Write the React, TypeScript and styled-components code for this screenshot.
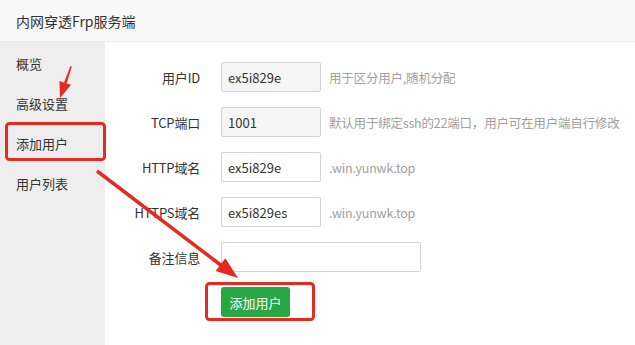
import * as React from "react";
import styled, { createGlobalStyle } from "styled-components";

const fontStack = `"Noto Sans CJK SC", "Noto Sans", sans-serif`;
const red = "#e62a20";

const GlobalStyle = createGlobalStyle`
  html, body {
    margin: 0;
    padding: 0;
    background: #fff;
  }
  body {
    font-family: ${fontStack};
    color: #333;
  }
`;

const Page = styled.div`
  position: relative;
  width: 635px;
  height: 345px;
  overflow: hidden;
  display: flex;
  flex-direction: column;
`;

const Header = styled.div`
  height: 41px;
  flex: none;
  display: flex;
  align-items: center;
  padding-left: 16px;
  background: #f8f8f8;
  border-bottom: 1px solid #ececec;
  font-size: 14px;
  color: #333;
`;

const Body = styled.div`
  flex: 1;
  display: flex;
`;

const Sidebar = styled.div`
  width: 105px;
  flex: none;
  background: #eeeeee;
  padding-top: 1px;
`;

const NavItem = styled.div`
  height: 40px;
  display: flex;
  align-items: center;
  padding-left: 16px;
  font-size: 13px;
  color: #333;
`;

const Main = styled.div`
  flex: 1;
  padding-top: 20px;
`;

const Form = styled.div`
  display: grid;
  grid-template-columns: 95px auto;
  column-gap: 21px;
  row-gap: 15px;
  align-items: center;
  justify-content: start;
`;

const Label = styled.div`
  text-align: right;
  font-size: 13px;
  letter-spacing: -0.2px;
  color: #333;
`;

const Field = styled.div`
  display: flex;
  align-items: center;
`;

const Input = styled.div<{ $readonly?: boolean; $wide?: boolean }>`
  box-sizing: border-box;
  width: ${(p) => (p.$wide ? "200px" : "100px")};
  height: 30px;
  border: 1px solid #d4d4d4;
  border-radius: 2px;
  background: ${(p) => (p.$readonly ? "#f5f5f5" : "#fff")};
  padding-left: 6px;
  display: flex;
  align-items: center;
  font-size: 13px;
  color: #333;
`;

const Hint = styled.span`
  margin-left: 8px;
  font-size: 12.5px;
  letter-spacing: -0.2px;
  color: #a0a0a0;
  white-space: nowrap;
`;

const SubmitButton = styled.button`
  grid-column: 2;
  width: 69px;
  height: 30px;
  border: none;
  border-radius: 3px;
  background: #28a745;
  color: #fff;
  font-family: ${fontStack};
  font-size: 13px;
  padding: 0;
`;

const Overlay = styled.svg`
  position: absolute;
  left: 0;
  top: 0;
  pointer-events: none;
`;

const rows = [
  { label: "用户ID", value: "ex5i829e", readonly: true, hint: "用于区分用户,随机分配" },
  { label: "TCP端口", value: "1001", readonly: true, hint: "默认用于绑定ssh的22端口，用户可在用户端自行修改" },
  { label: "HTTP域名", value: "ex5i829e", hint: ".win.yunwk.top" },
  { label: "HTTPS域名", value: "ex5i829es", hint: ".win.yunwk.top" },
];

export default function App() {
  return (
    <Page>
      <GlobalStyle />
      <Header>内网穿透Frp服务端</Header>
      <Body>
        <Sidebar>
          <NavItem>概览</NavItem>
          <NavItem>高级设置</NavItem>
          <NavItem>添加用户</NavItem>
          <NavItem>用户列表</NavItem>
        </Sidebar>
        <Main>
          <Form>
            {rows.map((r) => (
              <React.Fragment key={r.label}>
                <Label>{r.label}</Label>
                <Field>
                  <Input $readonly={r.readonly}>{r.value}</Input>
                  <Hint>{r.hint}</Hint>
                </Field>
              </React.Fragment>
            ))}
            <Label>备注信息</Label>
            <Field>
              <Input $wide />
            </Field>
            <SubmitButton>添加用户</SubmitButton>
          </Form>
        </Main>
      </Body>

      {/* annotation marks */}
      <Overlay width="635" height="345" viewBox="0 0 635 345">
        <rect x="6.5" y="123.5" width="98" height="36" rx="3" fill="none" stroke={red} strokeWidth="3" />
        <rect x="206.5" y="283.5" width="107" height="36" rx="3" fill="none" stroke={red} strokeWidth="3" />
        <polygon points="70.5,66 71.8,66.4 66.6,83.4 64,82.5" fill={red} />
        <polygon points="60,98 71,84.8 59.5,80.9" fill={red} />
        <line x1="97" y1="171" x2="222" y2="266" stroke={red} strokeWidth="3.5" />
        <polygon points="238,278 215.7,271.1 225.3,258.3" fill={red} />
      </Overlay>
    </Page>
  );
}
